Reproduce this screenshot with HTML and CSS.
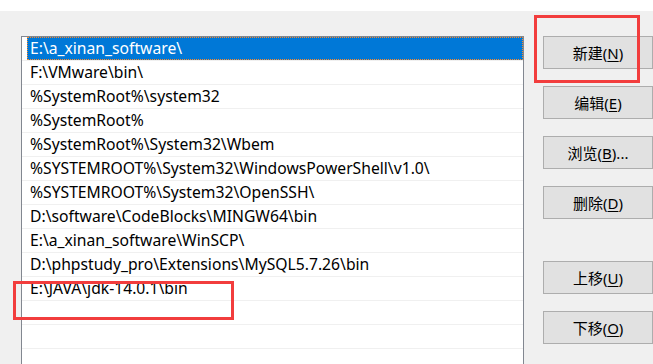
FILE: index.html
```html
<!DOCTYPE html>
<html lang="zh-CN">
<head>
    <meta charset="UTF-8">
    <meta name="viewport" content="width=device-width, initial-scale=1.0">
    <title>编辑环境变量</title>
    <link rel="stylesheet" href="styles.css">
</head>
<body>
    <div class="topstrip"></div>
    <div class="dialog">
        <ul class="pathlist">
            <li class="selected"><span class="focus">E:\a_xinan_software\</span></li>
            <li>F:\VMware\bin\</li>
            <li>%SystemRoot%\system32</li>
            <li>%SystemRoot%</li>
            <li>%SystemRoot%\System32\Wbem</li>
            <li>%SYSTEMROOT%\System32\WindowsPowerShell\v1.0\</li>
            <li>%SYSTEMROOT%\System32\OpenSSH\</li>
            <li>D:\software\CodeBlocks\MINGW64\bin</li>
            <li>E:\a_xinan_software\WinSCP\</li>
            <li>D:\phpstudy_pro\Extensions\MySQL5.7.26\bin</li>
            <li>E:\JAVA\jdk-14.0.1\bin</li>
            <li></li>
            <li></li>
            <li></li>
        </ul>
        <div class="actions">
            <button>新建(<u>N</u>)</button>
            <button>编辑(<u>E</u>)</button>
            <button>浏览(<u>B</u>)...</button>
            <button>删除(<u>D</u>)</button>
            <button class="spaced">上移(<u>U</u>)</button>
            <button>下移(<u>O</u>)</button>
        </div>
    </div>
    <!-- red annotation boxes drawn over the screenshot -->
    <div class="mark mark-new"></div>
    <div class="mark mark-java"></div>
</body>
</html>
```

FILE: styles.css
```css
body {
    margin: 0;
    height: 364px;
    overflow: hidden;
    background: #f0f0f0;
    font-family: "Noto Sans", "Noto Sans CJK SC", sans-serif;
    font-size: 15px;
    color: #000;
}

.topstrip {
    height: 11px;
    background: #fff;
}

.dialog {
    display: flex;
    align-items: flex-start;
    padding: 25px 0 0 21px;
}

.pathlist {
    list-style: none;
    margin: 0;
    padding: 0;
    width: 501px;
    background: #fff;
    border: 1px solid #828790;
    border-bottom: none;
    font-size: 15.7px;
}

.pathlist li {
    height: 23px;
    line-height: 23px;
    padding-left: 8px;
    border-bottom: 1px solid #f0f0f0;
    white-space: nowrap;
}

.pathlist li.selected {
    padding-left: 0;
}

.pathlist .focus {
    display: block;
    margin-left: 5px;
    padding-left: 3px;
    background: #0078d7;
    color: #fff;
    outline: 1px dotted #ff8a28;
    outline-offset: -1px;
}

.actions {
    display: flex;
    flex-direction: column;
    gap: 17px;
    margin-left: 19px;
}

.actions button {
    width: 110px;
    height: 33px;
    margin: 0;
    background: #e1e1e1;
    border: 1px solid #adadad;
    font: inherit;
    color: #000;
    padding: 0;
}

.actions button u {
    text-underline-offset: 2px;
}

.actions .spaced {
    margin-top: 25px;
}

.mark {
    position: absolute;
    border: 3px solid #f23d3d;
    box-sizing: border-box;
}

.mark-new {
    left: 534px;
    top: 15px;
    width: 106px;
    height: 68px;
}

.mark-java {
    left: 13px;
    top: 281px;
    width: 221px;
    height: 39px;
}
```
